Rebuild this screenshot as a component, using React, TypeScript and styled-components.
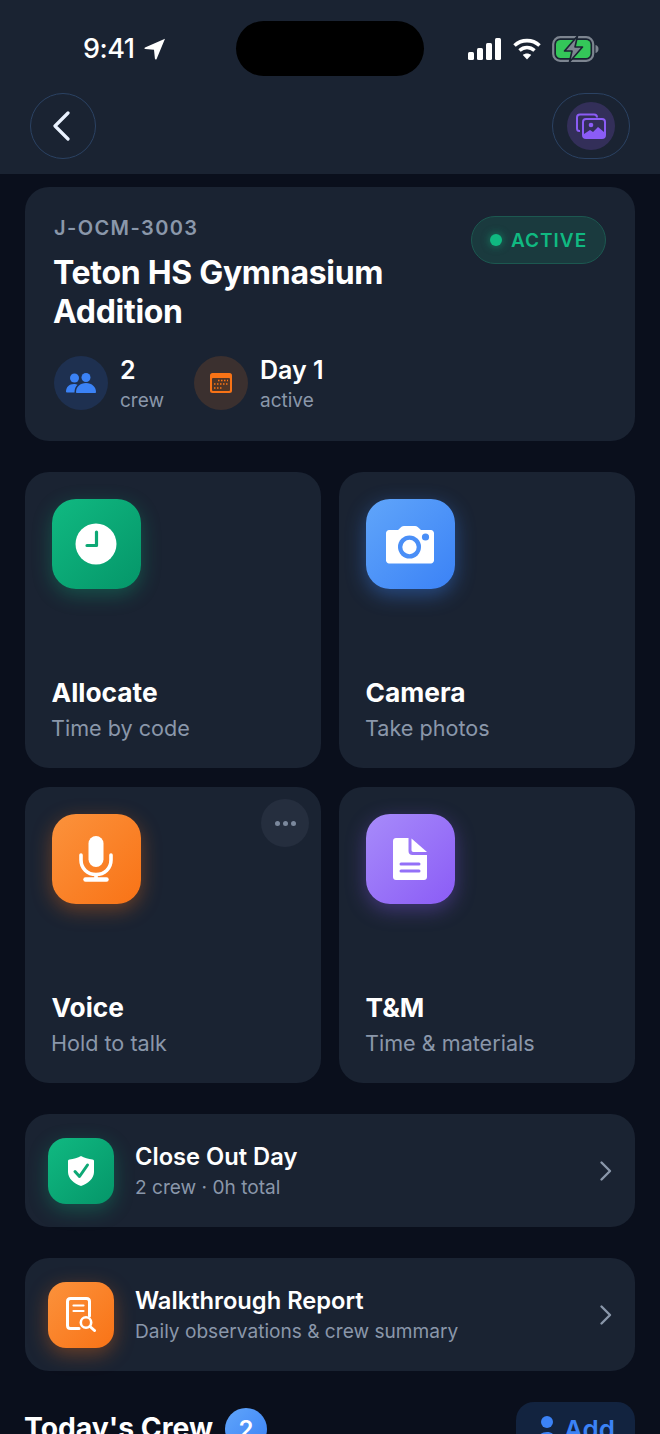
import React from "react";
import styled, { createGlobalStyle } from "styled-components";

const GlobalStyle = createGlobalStyle`
  html, body {
    margin: 0;
    height: 1434px;
    overflow: hidden;
    background: #0a0f1c;
  }
  * { box-sizing: border-box; }
`;

const tones = {
  green: { from: "#10b981", to: "#059669", glow: "rgba(16,185,129,0.32)" },
  blue: { from: "#60a5fa", to: "#3b82f6", glow: "rgba(59,130,246,0.42)" },
  orange: { from: "#fb923c", to: "#f97316", glow: "rgba(249,115,22,0.36)" },
  purple: { from: "#a78bfa", to: "#8b5cf6", glow: "rgba(139,92,246,0.36)" },
};
type Tone = keyof typeof tones;

const Page = styled.div`
  width: 660px;
  height: 1434px;
  overflow: hidden;
  background: #0a0f1c;
  font-family: Inter, "Liberation Sans", sans-serif;
  color: #fff;
`;

const Header = styled.header`
  height: 174px;
  background: #1a2332;
  padding: 21px 30px 0;
`;

const StatusBar = styled.div`
  display: grid;
  grid-template-columns: 1fr 188px 1fr;
  height: 55px;
  margin-bottom: 17px;
`;

const Clock = styled.div`
  display: flex;
  align-items: center;
  gap: 10px;
  padding-left: 53px;
  font-size: 27px;
  font-weight: 500;
  letter-spacing: -0.5px;
`;

const Island = styled.div`
  height: 55px;
  background: #000;
  border-radius: 28px;
`;

const StatusIcons = styled.div`
  display: flex;
  align-items: center;
  gap: 11px;
  padding-left: 44px;
`;

const NavBar = styled.div`
  display: flex;
  justify-content: space-between;
`;

const NavButton = styled.button<{ $wide?: boolean }>`
  width: ${({ $wide }) => ($wide ? "78px" : "66px")};
  height: 66px;
  border-radius: 33px;
  border: 1.5px solid #2b4263;
  background: #1a2332;
  display: flex;
  align-items: center;
  justify-content: center;
  padding: 0;
`;

const NavIconWrap = styled.span`
  width: 48px;
  height: 48px;
  border-radius: 50%;
  background: #332f59;
  display: flex;
  align-items: center;
  justify-content: center;
`;

const Content = styled.main`
  padding: 13px 25px 0;
`;

const JobCard = styled.section`
  height: 254px;
  background: #1a2332;
  border-radius: 24px;
  padding: 29px 29px 0;
  position: relative;
  margin-bottom: 31px;
`;

const JobCode = styled.div`
  font-size: 20px;
  line-height: 24px;
  font-weight: 600;
  letter-spacing: 1.4px;
  color: #8a97aa;
  margin-bottom: 13px;
`;

const JobTitle = styled.h1`
  margin: 0 0 20px -1px;
  font-size: 32px;
  line-height: 39px;
  font-weight: 700;
  letter-spacing: -0.3px;
  width: 400px;
`;

const Badge = styled.div`
  position: absolute;
  top: 29px;
  right: 29px;
  width: 135px;
  height: 48px;
  border-radius: 24px;
  border: 1.5px solid #1c5850;
  background: #1a3a3e;
  display: flex;
  align-items: center;
  gap: 9px;
  padding-left: 18px;
  color: #10b981;
  font-size: 19px;
  font-weight: 600;
  letter-spacing: 1px;
`;

const BadgeDot = styled.span`
  width: 12px;
  height: 12px;
  border-radius: 50%;
  background: #10b981;
  box-shadow: 0 0 8px rgba(16, 185, 129, 0.6);
`;

const Stats = styled.div`
  display: flex;
  gap: 30px;
`;

const Stat = styled.div`
  display: flex;
  align-items: center;
  gap: 12px;
`;

const StatIcon = styled.span<{ $bg: string }>`
  width: 54px;
  height: 54px;
  border-radius: 50%;
  background: ${({ $bg }) => $bg};
  display: flex;
  align-items: center;
  justify-content: center;
`;

const StatText = styled.div`
  padding-top: 4px;
`;

const StatValue = styled.div`
  font-size: 25px;
  line-height: 30px;
  font-weight: 600;
`;

const StatLabel = styled.div`
  margin-top: 2px;
  font-size: 19px;
  line-height: 27px;
  color: #8a97aa;
`;

const Grid = styled.div`
  display: grid;
  grid-template-columns: 296px 296px;
  grid-auto-rows: 296px;
  gap: 19px 18px;
  margin-bottom: 31px;
`;

const Tile = styled.article`
  position: relative;
  background: #1a2332;
  border-radius: 24px;
  padding: 27px 26px 0 26.5px;
  display: flex;
  flex-direction: column;
`;

const AppIcon = styled.span<{ $tone: Tone; $size: number; $radius: number }>`
  width: ${({ $size }) => $size}px;
  height: ${({ $size }) => $size}px;
  flex: none;
  border-radius: ${({ $radius }) => $radius}px;
  background: linear-gradient(
    135deg,
    ${({ $tone }) => tones[$tone].from},
    ${({ $tone }) => tones[$tone].to}
  );
  box-shadow: 0 6px 20px ${({ $tone }) => tones[$tone].glow};
  display: flex;
  align-items: center;
  justify-content: center;
`;

const TileTitle = styled.h2`
  margin: auto 0 0;
  font-size: 26.3px;
  line-height: 32px;
  font-weight: 700;
`;

const TileSub = styled.p`
  margin: 6px 0 26px -0.5px;
  font-size: 21.6px;
  line-height: 27px;
  color: #8a97aa;
`;

const MoreButton = styled.span`
  position: absolute;
  top: 12px;
  right: 12px;
  width: 48px;
  height: 48px;
  border-radius: 50%;
  background: #252e3e;
  display: flex;
  align-items: center;
  justify-content: center;
  gap: 3px;
`;

const MoreDot = styled.i`
  width: 5px;
  height: 5px;
  border-radius: 50%;
  background: #7b889c;
`;

const ActionRow = styled.article`
  height: 113px;
  background: #1a2332;
  border-radius: 24px;
  display: flex;
  align-items: center;
  padding: 0 22px 0 23px;
  gap: 21px;
  margin-bottom: 31px;
`;

const ActionText = styled.div`
  flex: 1;
`;

const ActionTitle = styled.h3`
  margin: 0;
  font-size: 23.7px;
  line-height: 30px;
  font-weight: 600;
`;

const ActionSub = styled.p`
  margin: 3px 0 0;
  font-size: 19.1px;
  line-height: 25px;
  color: #8a97aa;
`;

const CrewHeader = styled.div`
  display: flex;
  align-items: flex-start;
  gap: 12px;
`;

const CrewTitle = styled.h2`
  margin: 9px 0 0 -1px;
  font-size: 28.3px;
  line-height: 34px;
  font-weight: 700;
`;

const CountBadge = styled.span`
  width: 42px;
  height: 42px;
  margin-top: 6px;
  border-radius: 50%;
  background: linear-gradient(135deg, #60a5fa, #3b82f6);
  display: flex;
  align-items: center;
  justify-content: center;
  font-size: 24px;
  font-weight: 600;
`;

const AddButton = styled.button`
  margin-left: auto;
  width: 119px;
  height: 60px;
  border: 0;
  border-radius: 18px;
  background: #12233f;
  color: #3b82f6;
  font-family: inherit;
  font-size: 26px;
  font-weight: 600;
  display: flex;
  align-items: flex-start;
  gap: 2px;
  padding: 12px 0 0 20px;
`;

const Chevron = () => (
  <svg width="14" height="24" viewBox="0 0 14 24" fill="none">
    <path d="M2.5 3.5 11 12l-8.5 8.5" stroke="#8a97aa" strokeWidth="2.4" strokeLinecap="round" strokeLinejoin="round" />
  </svg>
);

const StatusGlyphs = () => (
  <StatusIcons>
    <svg width="34" height="22" viewBox="0 0 34 22" fill="#fff">
      <rect x="0" y="14" width="6" height="8" rx="1.5" />
      <rect x="9" y="10" width="6" height="12" rx="1.5" />
      <rect x="18" y="5" width="6" height="17" rx="1.5" />
      <rect x="27" y="0" width="6" height="22" rx="1.5" />
    </svg>
    <svg width="28" height="22" viewBox="0 0 28 22" fill="none" stroke="#fff" strokeWidth="3.6">
      <path d="M1.5 7.500c7-6.500 18-6.500 25 0" />
      <path d="M6.500 12.500c4.500-4 10.500-4 15 0" />
      <path d="M14 21.500 9.800 17c2.400-2 6-2 8.400 0z" fill="#fff" stroke="none" />
    </svg>
    <svg width="47" height="26" viewBox="0 0 47 26" fill="none">
      <rect x="1.200" y="1.200" width="40" height="23.600" rx="7" stroke="#7d8590" strokeWidth="2.200" />
      <rect x="4" y="4" width="34.500" height="18" rx="4.500" fill="#34c759" />
      <path d="M43.500 9c2 .4 3 2 3 4s-1 3.600-3 4z" fill="#7d8590" />
      <path d="M25.500 0 12.500 15h7.500L17.500 26l13-15h-7.500z" fill="#7d8590" stroke="#1a2332" strokeWidth="1.600" strokeLinejoin="round" />
    </svg>
  </StatusIcons>
);

const ClockIcon = () => (
  <svg width="42" height="42" viewBox="0 0 42 42">
    <circle cx="21" cy="21" r="20.500" fill="#fff" />
    <path d="M21.500 9v13.500H12" fill="none" stroke="#0ea875" strokeWidth="3.200" strokeLinecap="round" strokeLinejoin="round" />
  </svg>
);

const CameraIcon = () => (
  <svg width="48" height="40" viewBox="0 0 48 40">
    <path d="M3 6h9l3.500-3.200C16.200 2.200 17 2 18 2h11c1 0 2 .3 2.700.9L35 6h10c1.500 0 3 1.500 3 3v27.500c0 1.500-1.500 3-3 3H3c-1.500 0-3-1.500-3-3V9c0-1.500 1.500-3 3-3z" fill="#fff" />
    <circle cx="23.500" cy="23" r="11.500" fill="#4a8ff7" />
    <circle cx="23.500" cy="23" r="7.200" fill="#fff" />
    <circle cx="39.500" cy="13" r="3.600" fill="#4a8ff7" />
  </svg>
);

const MicIcon = () => (
  <svg width="34" height="46" viewBox="0 0 34 46" fill="none">
    <rect x="9.500" y="0" width="15" height="31" rx="7.500" fill="#fff" />
    <path d="M2 19v5c0 8.500 6.500 14.500 15 14.500S32 32.500 32 24v-5" stroke="#fff" strokeWidth="3.600" strokeLinecap="round" />
    <path d="M17 38v5" stroke="#fff" strokeWidth="3.600" />
    <path d="M6.500 43.500h21" stroke="#fff" strokeWidth="4.500" strokeLinecap="round" />
  </svg>
);

const DocIcon = () => (
  <svg width="34" height="42" viewBox="0 0 34 42">
    <path d="M3 0h12.500v13c0 2.500 1.500 4 4 4H34v22c0 1.700-1.300 3-3 3H3c-1.700 0-3-1.300-3-3V3c0-1.700 1.300-3 3-3z" fill="#fff" />
    <path d="M18.500 0.500 34 14H20.500c-1.200 0-2-.8-2-2z" fill="#fff" />
    <path d="M8 26h18M8 33h18" stroke="#9370f8" strokeWidth="3" strokeLinecap="round" />
  </svg>
);

const ShieldIcon = () => (
  <svg width="26" height="30" viewBox="0 0 26 30">
    <path d="M13 0c3 2 7.500 3 11.500 3.500C25.500 3.600 26 4.300 26 5v11c0 6.500-6 11.500-13 14C6 27.500 0 22.500 0 16V5c0-.7.5-1.400 1.500-1.500C5.500 3 10 2 13 0z" fill="#fff" />
    <path d="M7 15.500l4.500 5L19.500 9" fill="none" stroke="#0ea875" strokeWidth="3" strokeLinecap="round" strokeLinejoin="round" />
  </svg>
);

const ReportIcon = () => (
  <svg width="30" height="35" viewBox="0 0 30 35" fill="none" stroke="#fff" strokeLinecap="round">
    <path d="M13 31.500H4.500C2.500 31.500 1.500 30.500 1.500 28.500V4.500C1.500 2.500 2.500 1.500 4.500 1.500h16c2 0 3 1 3 3V19" strokeWidth="3" />
    <path d="M7.500 8.500h10M7.500 14h10" strokeWidth="2.200" />
    <circle cx="20" cy="25.500" r="5.200" strokeWidth="2.600" />
    <path d="M24 29.500l4.500 4" strokeWidth="3" />
  </svg>
);

const items: { tone: Tone; title: string; sub: string; icon: React.ReactNode; more?: boolean }[] = [
  { tone: "green", title: "Allocate", sub: "Time by code", icon: <ClockIcon /> },
  { tone: "blue", title: "Camera", sub: "Take photos", icon: <CameraIcon /> },
  { tone: "orange", title: "Voice", sub: "Hold to talk", icon: <MicIcon />, more: true },
  { tone: "purple", title: "T&M", sub: "Time & materials", icon: <DocIcon /> },
];

const actions: { tone: Tone; title: string; sub: string; icon: React.ReactNode }[] = [
  { tone: "green", title: "Close Out Day", sub: "2 crew · 0h total", icon: <ShieldIcon /> },
  { tone: "orange", title: "Walkthrough Report", sub: "Daily observations & crew summary", icon: <ReportIcon /> },
];

const App = () => (
  <Page>
    <GlobalStyle />
    <Header>
      <StatusBar>
        <Clock>
          9:41
          <svg width="22" height="22" viewBox="0 0 22 22">
            <path d="M21 .8 1 9.500c-.9.400-.7 1.500.3 1.600l8.700.6.900 8.900c.1 1 1.300 1.200 1.700.3z" fill="#fff" />
          </svg>
        </Clock>
        <Island />
        <StatusGlyphs />
      </StatusBar>
      <NavBar>
        <NavButton>
          <svg width="20" height="30" viewBox="0 0 20 30" fill="none">
            <path d="M15 2 2 15l13 13" stroke="#eaf2ff" strokeWidth="3.200" strokeLinecap="round" strokeLinejoin="round" />
          </svg>
        </NavButton>
        <NavButton $wide>
          <NavIconWrap>
            <svg width="30" height="26" viewBox="0 0 30 26" fill="none">
              <path d="M4 18H3.500C2 18 1 17 1 15.500v-11C1 2.500 2 1.500 4 1.500h14c2 0 3 1 3 3" stroke="#8b5cf6" strokeWidth="2" />
              <rect x="7" y="6" width="22" height="19" rx="3" stroke="#8b5cf6" strokeWidth="2" />
              <circle cx="15" cy="12" r="2.300" fill="#8b5cf6" />
              <path d="M8 24v-3l6-4 3 2 5-5 6 5v5z" fill="#8b5cf6" />
            </svg>
          </NavIconWrap>
        </NavButton>
      </NavBar>
    </Header>
    <Content>
      <JobCard>
        <JobCode>J-OCM-3003</JobCode>
        <JobTitle>Teton HS Gymnasium Addition</JobTitle>
        <Badge>
          <BadgeDot />
          ACTIVE
        </Badge>
        <Stats>
          <Stat>
            <StatIcon $bg="#1e3050">
              <svg width="30" height="20" viewBox="0 0 30 20" fill="#3b82f6">
                <circle cx="8.500" cy="5" r="4.500" />
                <circle cx="20" cy="4.500" r="4.500" />
                <path d="M0 19c0-5 3-8 8-8 1.500 0 2.500.3 3.500.8C9.500 13.500 8.500 16 8.500 19.500H1c-.6 0-1-.2-1-.5z" />
                <path d="M10 19c0-5 4-9 10-9s10 4 10 9c0 .5-.4 1-1 1H11c-.6 0-1-.5-1-1z" />
              </svg>
            </StatIcon>
            <StatText>
              <StatValue>2</StatValue>
              <StatLabel>crew</StatLabel>
            </StatText>
          </Stat>
          <Stat>
            <StatIcon $bg="#3b302f">
              <svg width="22" height="20" viewBox="0 0 22 20">
                <rect width="22" height="20" rx="2.500" fill="#f97316" />
                <rect x="2" y="5" width="18" height="13" rx="1" fill="#4f3526" />
                <path d="M8 7.500h1.500M11 7.500h1.500M14 7.500h1.500M17 7.500h1M4 11h1.500M7 11h1.500M10 11h1.500M13 11h1.500M16 11h1.500M4 15h1.500M7 15h1.500M10 15h1.500" stroke="#f97316" strokeWidth="1.500" />
              </svg>
            </StatIcon>
            <StatText>
              <StatValue>Day 1</StatValue>
              <StatLabel>active</StatLabel>
            </StatText>
          </Stat>
        </Stats>
      </JobCard>
      <Grid>
        {items.map((item) => (
          <Tile key={item.title}>
            <AppIcon $tone={item.tone} $size={89.5} $radius={24}>
              {item.icon}
            </AppIcon>
            {item.more && (
              <MoreButton>
                <MoreDot />
                <MoreDot />
                <MoreDot />
              </MoreButton>
            )}
            <TileTitle>{item.title}</TileTitle>
            <TileSub>{item.sub}</TileSub>
          </Tile>
        ))}
      </Grid>
      {actions.map((action) => (
        <ActionRow key={action.title}>
          <AppIcon $tone={action.tone} $size={66} $radius={18}>
            {action.icon}
          </AppIcon>
          <ActionText>
            <ActionTitle>{action.title}</ActionTitle>
            <ActionSub>{action.sub}</ActionSub>
          </ActionText>
          <Chevron />
        </ActionRow>
      ))}
      <CrewHeader>
        <CrewTitle>Today's Crew</CrewTitle>
        <CountBadge>2</CountBadge>
        <AddButton>
          <svg width="26" height="34" viewBox="0 0 26 34" fill="#3b82f6">
            <circle cx="11" cy="8" r="6" />
            <path d="M0 32c0-9 4-14 11-14 3 0 5 1 7 3-3 1-5 4-5 7 0 2 .5 3.500 1.500 5H1c-.6 0-1-.4-1-1z" />
            <circle cx="21" cy="28" r="5" fill="none" stroke="#3b82f6" strokeWidth="2.500" />
          </svg>
          Add
        </AddButton>
      </CrewHeader>
    </Content>
  </Page>
);

export default App;
